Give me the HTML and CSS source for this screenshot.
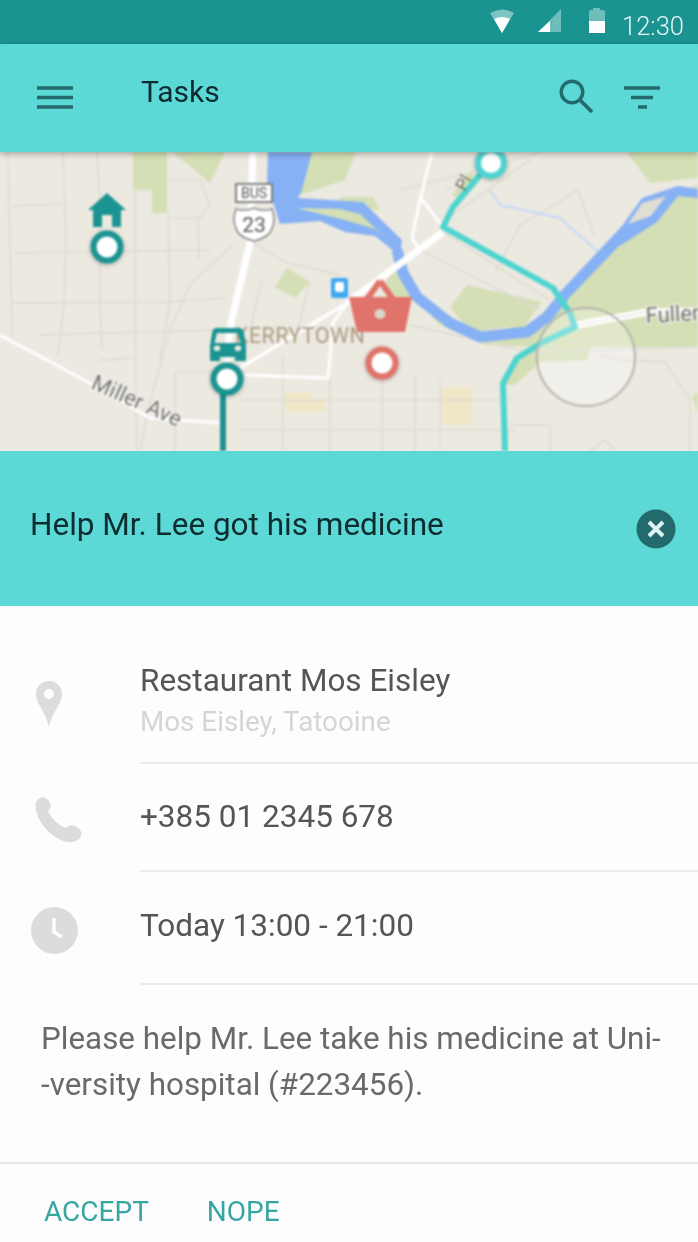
FILE: index.html
```html
<!DOCTYPE html>
<html lang="en">
<head>
  <meta charset="UTF-8">
  <title>Tasks</title>
  <link rel="stylesheet" href="styles.css">
</head>
<body>
  <div class="phone">
    <div class="statusbar">
      <svg class="status-icon" width="26" height="25" viewBox="0 0 26 25">
        <path d="M1 4 Q13 -3 25 4 L13 24 Z" fill="#7cc4c2"/>
        <path d="M5 10 Q13 6 21 10 L13 24 Z" fill="#fff"/>
      </svg>
      <svg class="status-icon signal" width="24" height="24" viewBox="0 0 24 24">
        <path d="M23 0 V23 H0 Z" fill="#6fbdbb"/>
        <path d="M12 12 V23 H0 Z" fill="#fff"/>
      </svg>
      <svg class="status-icon battery" width="18" height="25" viewBox="0 0 18 25">
        <path d="M5 0 H12 V2 H15 Q17 2 17 4 V25 H1 V4 Q1 2 3 2 H5 Z" fill="#6fbdbb"/>
        <path d="M1 13 H17 V25 H1 Z" fill="#fff"/>
      </svg>
      <span class="clock">12:30</span>
    </div>

    <div class="toolbar">
      <svg class="menu-icon" width="36" height="24" viewBox="0 0 36 24">
        <path d="M0 3 H36 M0 12.5 H36 M0 22 H36" stroke="#236a6c" stroke-width="3.4"/>
      </svg>
      <span class="toolbar-title">Tasks</span>
      <svg class="search-icon" width="35" height="35" viewBox="0 0 35 35">
        <circle cx="13" cy="13" r="10.8" fill="none" stroke="#236a6c" stroke-width="3.4"/>
        <path d="M21 21 L33 33" stroke="#236a6c" stroke-width="3.8"/>
      </svg>
      <svg class="filter-icon" width="36" height="24" viewBox="0 0 36 24">
        <path d="M0 3 H36 M7 12.5 H29 M14 22 H23" stroke="#236a6c" stroke-width="3.4"/>
      </svg>
    </div>

    <div class="map-wrap">
    <svg class="map" width="698" height="299" viewBox="0 152 698 299">
      <rect x="0" y="152" width="698" height="299" fill="#ece9e1"/>

      <!-- parks -->
      <g fill="#d4dfb5">
        <path d="M133 152 H167 V213 H152 V190 H133 Z"/>
        <path d="M173 152 H225 L210 183 Z"/>
        <path d="M287 268 L310 282 L295 298 L275 287 Z"/>
        <path d="M302 152 H356 L345 180 L300 195 Z"/>
        <path d="M627 152 H698 V178 L650 183 Z"/>
        <path d="M698 185 L640 205 L575 290 L540 320 L480 335 L430 315 L405 280 L398 258 L415 300 L440 325 L485 345 L535 347 H698 Z"/>
        <path d="M533 347 H590 L587 360 L540 362 L515 385 L505 385 L505 375 Z"/>
        <path d="M692 397 L698 392 V413 Z"/>
        <path d="M450 307 L467 285 L542 302 L525 325 L470 332 Z"/>
        <path d="M395 265 L412 300 L400 300 L385 285 Z"/>
        <path d="M452 195 L470 172 L480 180 L462 200 Z"/>
        <path d="M340 197 H373 L380 210 H340 Z"/>
      </g>

      <!-- blocks -->
      <g fill="#f0e6c8">
        <rect x="442" y="387" width="31" height="38"/>
        <path d="M285 392 H312 V398 H325 V412 H285 Z"/>
      </g>

      <!-- small streets -->
      <g fill="none" stroke="#dedbd2" stroke-width="1.6">
        <path d="M8 152 L12 335 M63 152 L66 240 L64 305 L58 355 M97 152 L100 205 L100 300 L102 350 M135 190 L135 300 L136 410 L137 451"/>
        <path d="M12 206 L63 204 M12 253 L210 250 M12 303 L170 302 L225 298 M38 335 L215 330 M100 360 L135 358 M168 213 L170 300 L160 360"/>
        <path d="M168 180 L200 180 L210 205 L200 218 H168 M198 218 L199 260"/>
        <path d="M232 245 L190 285 L170 330 L148 410 L140 451"/>
        <path d="M175 372 H240 M175 372 V451 M240 400 H515 M240 430 H515 M283 355 V451 M330 378 V451 M382 378 V451 M415 375 V451 M440 380 V451"/>
        <path d="M250 240 L285 262 L340 275 M310 282 L295 340 M262 280 L250 330"/>
        <path d="M400 190 L480 170 L540 152 M452 215 L530 160 M480 170 L470 190 L445 188"/>
        <path d="M495 272 L520 225 L578 190 L594 235"/>
        <path d="M443 232 L550 300 M420 250 L540 310 M410 325 L530 352 L698 347 M600 355 L620 360 L665 362 L690 400 V451"/>
        <path d="M510 425 H550 V451 M615 451 L605 440 L590 451"/>
      </g>

      <!-- water -->
      <path d="M490 190 L500 205 L560 218 L598 252" fill="none" stroke="#c3d8f8" stroke-width="2"/>
      <path d="M698 189 L678 186 L642 198 L622 226 L559 293 L566 301 L618 247 L657 222 L678 196 L698 198 Z" fill="#86b1f4"/>
      <path d="M642 203 L666 196 L651 216 L628 224 Z" fill="#e0ddd3"/>
      <path d="M564 296 L547 317 L527 332 L480 337 L450 323 L417 297 L403 273 L397 250" fill="none" stroke="#86b1f4" stroke-width="11" stroke-linejoin="round"/>
      <path d="M268 152 H312 L302 190 L298 198 L363 202 L402 240 L400 256 L375 236 L345 232 L320 221 L280 224 L267 183 Z" fill="#86b1f4"/>
      <path d="M296 208 L340 209 L360 214 L386 238 L375 229 L345 220 Z" fill="#d4dfb5"/>

      <!-- white roads -->
      <g fill="none" stroke="#fff" stroke-linejoin="round">
        <path d="M253 152 L250 243 L230 327 L226 380" stroke-width="7"/>
        <path d="M0 335 L90 383 L150 418 L222 423" stroke-width="3"/>
        <path d="M240 368 L347 303" stroke-width="3.4"/>
        <path d="M347 303 L443 232" stroke-width="7"/>
        <path d="M245 375 L328 378 L333 323 L347 303" stroke-width="3"/>
        <path d="M432 152 L420 200 L412 238 L418 248 M420 197 L443 227" stroke-width="3"/>
        <path d="M577 325 L647 312 L698 311" stroke-width="7"/>
      </g>
      <path d="M577 325 L647 312 L698 311" fill="none" stroke="#d9d6cd" stroke-width="1"/>

      <!-- route -->
      <path class="route" d="M490 163 L453 207 L443 227 L553 288 L570 313 L575 327 L543 342 L517 358 L503 383 L505 451"/>

      <!-- touch indicator -->
      <circle cx="586" cy="357" r="49" fill="#fff" fill-opacity="0.28" stroke="#b4b2ab" stroke-width="2"/>

      <!-- labels -->
      <text class="map-label place" x="235" y="343">KERRYTOWN</text>
      <text class="map-label street" transform="translate(90 388) rotate(24)">Miller Ave</text>
      <text class="map-label street" transform="translate(646 323) rotate(-3)">Fuller</text>
      <text class="map-label park" transform="translate(465 192) rotate(-62)">Pl</text>

      <!-- bus route shield -->
      <rect x="236" y="184" width="36" height="18" fill="#fff" stroke="#7d7d7d" stroke-width="2"/>
      <text class="shield-bus" x="254" y="198">BUS</text>
      <path d="M236 209 Q245 212 254 208 Q263 212 272 209 Q276 220 272 228 Q270 237 254 241 Q238 237 236 228 Q232 220 236 209 Z" fill="#fff" stroke="#8a8a8a" stroke-width="1.6"/>
      <text class="shield-num" x="254" y="232">23</text>

      <!-- bus stop -->
      <rect x="331" y="278" width="17" height="20" rx="2" fill="#3ea9f2"/>
      <rect x="335" y="282" width="9" height="10" rx="2" fill="#fff"/>

      <!-- home marker -->
      <path d="M107 193 L126 210 H121 V227 H112 V215 H102 V227 H93 V210 H88 Z" fill="#1a9391"/>
      <circle class="pin-teal" cx="107" cy="247" r="13.5"/>

      <!-- car marker -->
      <path d="M220 390 H226 V451 H220 Z" fill="#1a9391"/>
      <path fill-rule="evenodd" d="M216 328 H239 Q243 328 244 333 L246 346 V361 H235 V357 H220 V361 H210 V346 L212 333 Q213 328 216 328 Z M217 333 L214.5 343 H240.5 L238 333 Z M217 345.5 A2.8 2.8 0 1 0 217 351 A2.8 2.8 0 1 0 217 345.5 Z M238 345.5 A2.8 2.8 0 1 0 238 351 A2.8 2.8 0 1 0 238 345.5 Z" fill="#1a9391"/>
      <circle class="pin-teal" cx="227" cy="379" r="13.5"/>

      <!-- top marker -->
      <circle class="pin-light" cx="491" cy="163" r="13"/>

      <!-- basket marker -->
      <path d="M380 281 L367 299 M380 281 L393 299" stroke="#e0736a" stroke-width="6" fill="none"/>
      <path d="M349 297 H412 L405 332 H357 Z" fill="#e0736a"/>
      <ellipse cx="380" cy="314" rx="5.5" ry="5" fill="#ddd6cb"/>
      <circle class="pin-red" cx="382" cy="363" r="13.5"/>
    </svg>
    </div>

    <div class="banner">
      <span class="banner-title">Help Mr. Lee got his medicine</span>
      <svg class="close-icon" width="40" height="40" viewBox="0 0 40 40">
        <circle cx="20" cy="20" r="19.5" fill="#236a6c"/>
        <path d="M13 13 L27 27 M27 13 L13 27" stroke="#dff3f3" stroke-width="4"/>
      </svg>
    </div>

    <div class="details">
      <div class="row row-place">
        <div class="row-icon">
          <svg width="28" height="48" viewBox="0 0 28 48">
            <path fill-rule="evenodd" d="M14 1 C6 1 1 7 1 14 C1 24 10 30 14 47 C18 30 27 24 27 14 C27 7 22 1 14 1 Z M14 9 A5 5 0 1 1 14 19 A5 5 0 1 1 14 9 Z" fill="#dcdcdc"/>
          </svg>
        </div>
        <div class="row-text">
          <div class="row-main">Restaurant Mos Eisley</div>
          <div class="row-sub">Mos Eisley, Tatooine</div>
        </div>
      </div>
      <div class="row row-phone">
        <div class="row-icon">
          <svg width="47" height="46" viewBox="0 0 47 46">
            <path d="M5 1 C9 -1 13 2 15 6 C17 10 15 12 13 14 C15 20 24 29 31 31 C33 29 36 27 40 29 C44 31 48 35 46 39 C44 44 38 46 32 45 C18 42 4 28 1 13 C0 8 1 3 5 1 Z" fill="#dcdcdc"/>
          </svg>
        </div>
        <div class="row-text">
          <div class="row-main">+385 01 2345 678</div>
        </div>
      </div>
      <div class="row row-time">
        <div class="row-icon">
          <svg width="47" height="47" viewBox="0 0 47 47">
            <circle cx="23.5" cy="23.5" r="23.5" fill="#dcdcdc"/>
            <path d="M23 11 V25 L31 30" fill="none" stroke="#fdfdfd" stroke-width="3.4"/>
          </svg>
        </div>
        <div class="row-text">
          <div class="row-main">Today 13:00 - 21:00</div>
        </div>
      </div>
      <p class="description">Please help Mr. Lee take his medicine at Uni-<br>-versity hospital (#223456).</p>
    </div>

    <div class="actions">
      <a class="action">ACCEPT</a>
      <a class="action">NOPE</a>
    </div>
  </div>
</body>
</html>
```

FILE: styles.css
```css
html, body {
  margin: 0;
  padding: 0;
}
body {
  font-family: Roboto, "Noto Sans", sans-serif;
  background-color: #fdfdfd;
}
.phone {
  width: 698px;
  height: 1242px;
  overflow: hidden;
  display: flex;
  flex-direction: column;
  position: relative;
}

/* status bar */
.statusbar {
  height: 44px;
  background-color: #1a9391;
  display: flex;
  align-items: flex-start;
  padding-right: 14px;
  justify-content: flex-end;
  color: #e6f5f5;
}
.status-icon {
  margin-top: 9px;
  margin-right: 23px;
}
.signal {
  margin-right: 26px;
}
.battery {
  margin-top: 8px;
  margin-right: 16px;
}
.clock {
  font-size: 25.5px;
  font-weight: 300;
  line-height: 26px;
  margin-top: 13px;
  filter: blur(0.4px);
}

/* toolbar */
.toolbar {
  height: 108px;
  background-color: #5cd9d6;
  display: flex;
  align-items: flex-start;
  position: relative;
  z-index: 2;
  box-shadow: 0 2px 6px rgba(0, 0, 0, 0.3);
}
.menu-icon {
  margin: 41px 0 0 37px;
}
.toolbar-title {
  font-size: 30px;
  line-height: 36px;
  color: #0c2c30;
  margin: 30px 0 0 68px;
  flex: 1;
  filter: blur(0.4px);
}
.search-icon {
  margin: 35px 30px 0 0;
}
.filter-icon {
  margin: 41px 38px 0 0;
}

/* map */
.map-wrap {
  height: 299px;
  flex: none;
  overflow: hidden;
  background-color: #ece9e1;
}
.map {
  display: block;
  filter: blur(0.8px);
}
.route {
  fill: none;
  stroke: #4ed4d0;
  stroke-width: 6;
  stroke-linejoin: round;
}
.pin-teal, .pin-light, .pin-red {
  fill: #fff;
  stroke-width: 6;
  filter: drop-shadow(0 1px 2px rgba(0, 0, 0, 0.3));
}
.pin-teal {
  stroke: #1a9391;
}
.pin-light {
  stroke: #4ed4d0;
}
.pin-red {
  stroke: #e0736a;
}
.map-label {
  font-family: Roboto, sans-serif;
}
.place {
  font-size: 21.5px;
  letter-spacing: 0.4px;
  fill: #a99b80;
}
.street {
  font-size: 22px;
  fill: #6f6c66;
  stroke: #fff;
  stroke-width: 2px;
  paint-order: stroke;
}
.park {
  font-size: 17px;
  fill: #6f6c66;
}
.shield-bus {
  font-family: Roboto, sans-serif;
  font-size: 14px;
  fill: #555;
  text-anchor: middle;
}
.shield-num {
  font-family: Roboto, sans-serif;
  font-size: 21px;
  fill: #555;
  text-anchor: middle;
}

/* banner */
.banner {
  height: 155px;
  flex: none;
  background-color: #5cd9d6;
  display: flex;
  align-items: center;
  justify-content: space-between;
  padding: 0 22px 0 30px;
}
.banner-title {
  font-size: 31.5px;
  line-height: 36px;
  color: #0c2c30;
  margin-top: -7px;
  filter: blur(0.4px);
}
.close-icon {
  margin-top: 1px;
}

/* details */
.details {
  flex: 1;
}
.row {
  display: flex;
}
.row-icon {
  width: 140px;
  flex: none;
}
.row-text {
  flex: 1;
  border-bottom: 2px solid #ebebeb;
  filter: blur(0.4px);
}
.row-main {
  font-size: 31.5px;
  line-height: 36px;
  color: #555;
}
.row-sub {
  font-size: 27.8px;
  line-height: 32px;
  color: #d5d5d5;
  margin-top: 7px;
}
.row-place .row-text {
  height: 158px;
  padding-top: 57px;
  box-sizing: border-box;
}
.row-place .row-icon {
  padding: 74px 0 0 35px;
  width: 105px;
}
.row-phone .row-text {
  height: 108px;
  padding-top: 35px;
  box-sizing: border-box;
}
.row-phone .row-icon {
  padding: 33px 0 0 35px;
  width: 105px;
}
.row-time .row-text {
  height: 113px;
  padding-top: 36px;
  box-sizing: border-box;
}
.row-time .row-icon {
  padding: 35px 0 0 31px;
  width: 109px;
}
.description {
  margin: 31px 0 0 41px;
  font-size: 31.4px;
  line-height: 46px;
  color: #6a6a6a;
  filter: blur(0.4px);
}

/* footer actions */
.actions {
  height: 80px;
  flex: none;
  box-sizing: border-box;
  border-top: 2px solid #e6e6e6;
  display: flex;
  align-items: center;
  padding: 16px 0 0 44px;
  gap: 58px;
}
.action {
  font-size: 28px;
  color: #37a5a2;
  filter: blur(0.4px);
}
```
